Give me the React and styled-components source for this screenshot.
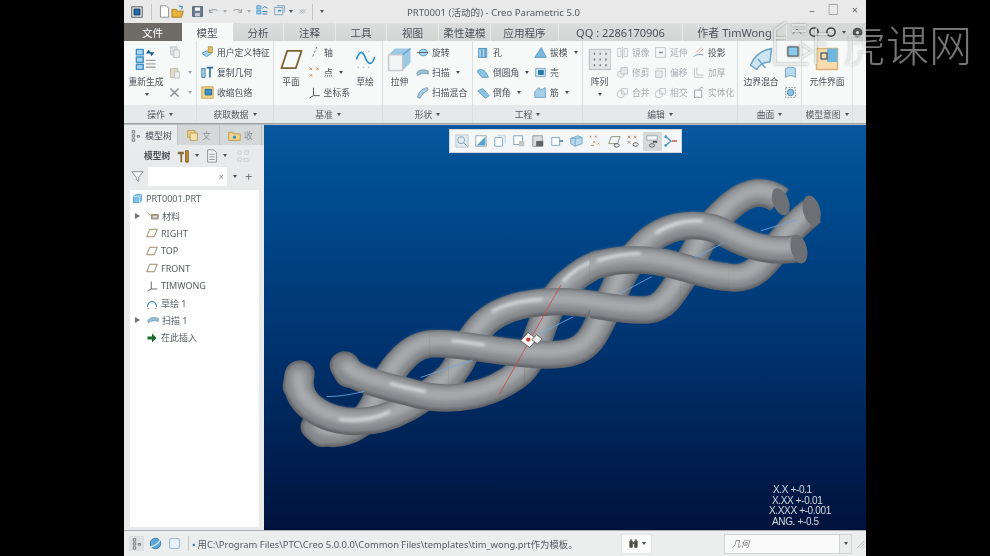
import React from 'react'
import styled, { createGlobalStyle } from 'styled-components'

const GlobalStyle = createGlobalStyle`
  html, body {
    margin: 0;
    width: 990px;
    height: 556px;
    overflow: hidden;
    background: #000;
    font-family: "Noto Sans", "Noto Sans CJK SC", sans-serif;
  }
`

const Page = styled.div`
  position: relative;
  width: 990px;
  height: 556px;
  background: #000;
`

const Window = styled.div`
  width: 742px;
  height: 556px;
  margin: 0 auto;
  display: flex;
  flex-direction: column;
  background: #e8eaeb;
  color: #4b5157;
  filter: blur(0.4px);
`

/* title bar */
const TitleBar = styled.header`
  height: 23px;
  flex: none;
  display: flex;
  align-items: center;
  background: #e9e9e9;
  font-size: 10px;
`
const Quick = styled.div`
  width: 283px;
  flex: none;
  display: flex;
  align-items: center;
  padding-left: 7px;
  box-sizing: border-box;
`
const QuickSep = styled.span`
  width: 1px;
  height: 16px;
  background: #c4c4c4;
  margin: ${(p) => p.$m || '0 5px'};
`
const Spacer = styled.span`
  width: ${(p) => p.$w}px;
  flex: none;
`
const Title = styled.div`
  color: #555b60;
  font-size: 9.6px;
  white-space: nowrap;
`
const WinButtons = styled.div`
  margin-left: auto;
  display: flex;
  gap: 13px;
  padding: 0 8px 3px 0;
  font-size: 11px;
  line-height: 14px;
  color: #666;
`

/* tabs */
const TabRow = styled.nav`
  height: 18px;
  flex: none;
  display: flex;
  background: #d6d7d7;
`
const Tab = styled.div`
  width: ${(p) => p.$w}px;
  flex: none;
  box-sizing: border-box;
  display: flex;
  align-items: center;
  justify-content: center;
  font-size: ${(p) => p.$size || 10.6}px;
  white-space: nowrap;
  color: ${(p) => (p.$file ? '#fff' : '#4b5157')};
  background: ${(p) => (p.$file ? '#6e6b67' : p.$on ? '#f7f8f8' : 'linear-gradient(#dcdddd, #d3d5d5)')};
  border-right: 1px solid ${(p) => (p.$file || p.$on ? 'transparent' : '#e7e8e8')};
`
const HelpIcons = styled.div`
  flex: 1;
  display: flex;
  align-items: center;
  justify-content: flex-end;
  gap: 5px;
  padding-right: 2px;
`

/* ribbon */
const Ribbon = styled.div`
  height: 82px;
  flex: none;
  display: flex;
  background: #f7f8f8;
  border-bottom: 1px solid #9ea2a4;
`
const Group = styled.section`
  width: ${(p) => p.$w}px;
  flex: ${(p) => (p.$w ? 'none' : 1)};
  box-sizing: border-box;
  display: flex;
  flex-direction: column;
  border-right: ${(p) => (p.$w ? '1px solid #dcdfe0' : 'none')};
`
const GroupBody = styled.div`
  height: 64px;
  display: flex;
  padding-left: ${(p) => p.$pad || 0}px;
`
const GroupLabel = styled.div`
  height: 18px;
  display: flex;
  align-items: center;
  justify-content: center;
  gap: 3px;
  background: #e6e9ea;
  font-size: 8.8px;
  color: #555b60;
`
const Big = styled.div`
  width: ${(p) => p.$w}px;
  flex: none;
  display: flex;
  flex-direction: column;
  align-items: center;
  padding-top: 4px;
  font-size: 8.8px;
  white-space: nowrap;
`
const BigIcon = styled.div`
  height: 28px;
  display: flex;
  align-items: center;
  justify-content: center;
`
const BigText = styled.div`
  height: 14px;
  line-height: 14px;
  margin-top: 2px;
  margin-bottom: 4px;
`
const Col = styled.div`
  width: ${(p) => (p.$w ? `${p.$w}px` : 'auto')};
  flex: none;
  display: flex;
  flex-direction: column;
  padding-top: 1px;
`
const Row = styled.div`
  height: 20px;
  display: flex;
  align-items: center;
  gap: 3px;
  font-size: 8.8px;
  white-space: nowrap;
  color: ${(p) => (p.$off ? '#a9adb0' : '#4b5157')};
`
const Caret = styled.i`
  display: block;
  width: 0;
  height: 0;
  margin-left: ${(p) => p.$m ?? 3}px;
  border-left: 2.5px solid transparent;
  border-right: 2.5px solid transparent;
  border-top: 3px solid ${(p) => p.$c || '#4b5157'};
`

/* work area */
const Main = styled.main`
  flex: 1;
  min-height: 0;
  display: flex;
  border-top: 1px solid #b9bdbf;
`
const Side = styled.aside`
  width: 140px;
  flex: none;
  display: flex;
  flex-direction: column;
  background: #e8eaeb;
`
const SideTabs = styled.div`
  height: 20px;
  flex: none;
  display: flex;
  background: #d5d8d9;
`
const SideTab = styled.div`
  width: ${(p) => p.$w}px;
  box-sizing: border-box;
  display: flex;
  align-items: center;
  justify-content: center;
  gap: 3px;
  font-size: 8.8px;
  background: ${(p) => (p.$on ? '#e9ebec' : '#d5d8d9')};
  border-right: 1px solid #bfc3c5;
  color: ${(p) => (p.$on ? '#4b5157' : '#8d9296')};
`
const SideTools = styled.div`
  height: 21px;
  flex: none;
  display: flex;
  align-items: center;
  padding-left: 20px;
  font-size: 8.8px;
  font-weight: 700;
`
const FilterRow = styled.div`
  height: 20px;
  flex: none;
  display: flex;
  align-items: center;
  padding-left: 7px;
`
const FilterInput = styled.div`
  width: 79px;
  height: 19px;
  margin-left: 4px;
  box-sizing: border-box;
  display: flex;
  align-items: center;
  justify-content: flex-end;
  padding-right: 3px;
  background: #fff;
  font-size: 9px;
  color: #888;
`
const Plus = styled.span`
  margin-left: 8px;
  font-size: 13px;
  line-height: 1;
  color: #6d7378;
`
const Tree = styled.div`
  flex: 1;
  margin: 4px 5px 3px 6px;
  background: #fff;
  display: flex;
  flex-direction: column;
`
const TreeRow = styled.div`
  height: 17.4px;
  flex: none;
  display: flex;
  align-items: center;
  gap: 3px;
  padding-left: ${(p) => p.$pad}px;
  font-size: 9px;
  color: #565c62;
`
const Arrow = styled.i`
  display: block;
  width: 0;
  height: 0;
  margin-right: 4px;
  border-top: 3px solid transparent;
  border-bottom: 3px solid transparent;
  border-left: 5px solid #6f7478;
`
const Viewport = styled.div`
  flex: 1;
  position: relative;
  overflow: hidden;
  background: linear-gradient(#07589f 0, #004f94 12%, #003673 50%, #00123c 100%);
`
const FloatBar = styled.div`
  position: absolute;
  top: 4px;
  left: 185px;
  width: 233px;
  height: 24px;
  box-sizing: border-box;
  display: flex;
  align-items: center;
  padding-left: 2px;
  background: #f3f5f6;
  border: 1px solid #cfd6db;
`
const FloatBtn = styled.div`
  width: 19.3px;
  height: 19px;
  display: flex;
  align-items: center;
  justify-content: center;
  background: ${(p) => (p.$on ? '#d5d8da' : 'transparent')};
  svg {
    opacity: 0.8;
  }
`
const Model = styled.svg`
  position: absolute;
  left: 6px;
  top: 45px;
  width: 570px;
  height: 280px;
  overflow: visible;
`
const Tolerance = styled.div`
  position: absolute;
  top: 360px;
  left: 505px;
  font-family: "Liberation Sans", sans-serif;
  font-size: 10px;
  line-height: 10.5px;
  letter-spacing: -0.35px;
  white-space: nowrap;
  color: #d4d8de;
`
const TolLine = styled.div`
  padding-left: ${(p) => p.$pad}px;
`

/* status */
const StatusBar = styled.footer`
  height: 26px;
  flex: none;
  box-sizing: border-box;
  display: flex;
  align-items: center;
  padding-left: 5px;
  background: #eceded;
  border-top: 1px solid #a9adaf;
`
const StatusBtn = styled.div`
  width: 15px;
  height: 15px;
  margin-right: 4px;
  display: flex;
  align-items: center;
  justify-content: center;
  background: ${(p) => (p.$on ? '#dcdedf' : 'none')};
`
const StatusSep = styled.span`
  width: 1px;
  height: 15px;
  margin: 0 3px 0 2px;
  background: #c3c6c8;
`
const Message = styled.div`
  width: 429px;
  flex: none;
  font-size: 9.4px;
  color: #555b60;
  white-space: nowrap;
  &::before {
    content: '•';
    color: #1d5f96;
    margin-right: 2px;
  }
`
const FindBox = styled.div`
  width: 31px;
  height: 20px;
  box-sizing: border-box;
  display: flex;
  align-items: center;
  justify-content: center;
  background: #fbfbfb;
  border: 1px solid #e2e3e4;
`
const SelectBox = styled.div`
  width: 128px;
  height: 20px;
  margin-left: 72px;
  box-sizing: border-box;
  display: flex;
  align-items: center;
  justify-content: space-between;
  padding-left: 7px;
  background: #fafafa;
  border: 1px solid #cfd2d3;
  font-size: 8.8px;
  font-style: italic;
  color: #777;
`
const SelectArrow = styled.div`
  width: 11px;
  height: 18px;
  display: flex;
  align-items: center;
  justify-content: center;
  background: #eceded;
  border-left: 1px solid #cfd2d3;
`
const Grip = styled.span`
  display: flex;
  margin-left: 2px;
`

/* watermark */
const Watermark = styled.div`
  position: absolute;
  left: 770px;
  top: 20px;
  display: flex;
  gap: 3px;
  pointer-events: none;
  filter: drop-shadow(0 0 1px rgba(0, 0, 0, 0.5));
`
const MarkText = styled.span`
  font-family: "Noto Sans CJK SC", sans-serif;
  font-weight: 200;
  font-size: 43px;
  line-height: 46px;
  color: rgba(255, 255, 255, 0.46);
`

const Svg = ({ s = 13, w, h, box = '0 0 16 16', children }) => (
  <svg width={w || s} height={h || s} viewBox={box} fill="none" strokeLinejoin="round">
    {children}
  </svg>
)

const B = '#3d8fc4'
const LB = '#a9d3ec'

const icons = {
  app: <><rect x="1" y="1" width="14" height="14" fill="#dfe6ea" stroke="#333" /><rect x="4" y="4" width="8" height="8" fill="#1f6fb0" stroke="#123" /></>,
  file: <path d="M3 1h7l3 3v11H3z" fill="#fff" stroke="#7a8085" />,
  open: <><path d="M1 5h5l1 2h7l-2 7H1z" fill="#e8b23e" stroke="#a77b1c" /><path d="M9 1l4 1-1 3" stroke="#3d8fc4" strokeWidth="1.4" /></>,
  save: <><rect x="2" y="2" width="12" height="12" fill="#6f7f94" stroke="#3f4c5e" /><rect x="5" y="3" width="6" height="4" fill="#fff" /><rect x="5" y="10" width="6" height="4" fill="#ccd" /></>,
  undo: <path d="M3 9a6 5 0 0 1 10-2M3 5v4h4" stroke="#a4a9ad" strokeWidth="1.4" />,
  redo: <path d="M13 9a6 5 0 0 0-10-2M13 5v4H9" stroke="#a4a9ad" strokeWidth="1.4" />,
  regen: <><rect x="1" y="1" width="5" height="4" fill={LB} stroke={B} /><rect x="1" y="7" width="5" height="4" fill={LB} stroke={B} /><path d="M8 4l3-2 3 2M8 8h6M8 11h6" stroke="#17689f" /></>,
  win: <><rect x="2" y="3" width="10" height="9" stroke="#6d9cbc" /><path d="M5 1h9v8" stroke="#6d9cbc" /><path d="M6 7h4" stroke={B} strokeWidth="2" /></>,
  closeWin: <path d="M3 5l6 6m0-6l-6 6M7 5l6 6m0-6l-6 6" stroke="#9aa0a4" />,
  regenBig: <><rect x="1" y="1" width="5" height="4" fill={LB} stroke={B} /><rect x="1" y="6.5" width="5" height="4" fill={LB} stroke={B} /><rect x="1" y="12" width="5" height="3.5" fill={LB} stroke={B} /><path d="M8 9h7M8 11.5h7M8 14h7" stroke="#a5a9ac" /><path d="M8 4l2-3 1 2h3l-2 3-1-2H8z" fill="#12588e" /></>,
  copy: <><rect x="3" y="1" width="8" height="10" fill="#dfe2e4" stroke="#b8bcbf" /><rect x="7" y="5" width="7" height="9" fill="#eceeef" stroke="#b8bcbf" /></>,
  paste: <><rect x="3" y="3" width="9" height="11" fill="#dfd9c8" stroke="#b8b4a6" /><rect x="8" y="7" width="6" height="8" fill="#eceeef" stroke="#b8bcbf" /></>,
  del: <path d="M3 3l10 10M13 3L3 13" stroke="#8a8f93" strokeWidth="1.8" />,
  udf: <><path d="M1 9l6-3 6 3-6 4z" fill={LB} stroke={B} /><path d="M9 1h5v7h-5z" fill="#e6c06a" stroke="#b08a2f" /></>,
  cgeo: <><rect x="1" y="3" width="4" height="11" fill={LB} stroke="#2a6e9e" /><path d="M7 2h8M11 2v12" stroke="#2a6e9e" strokeWidth="2" /></>,
  shrink: <><rect x="1" y="1" width="14" height="14" fill="#f2d78e" stroke="#c39a3a" /><rect x="5" y="4" width="8" height="7" fill={B} stroke="#175e90" /></>,
  plane: <path d="M5 2h10l-4 12H1z" stroke="#7a6436" strokeWidth="1.2" />,
  axis: <path d="M11 1L5 15" stroke="#55595d" strokeDasharray="3 2" />,
  point: <path d="M2 2l3 3m0-3l-3 3M10 2l3 3m0-3l-3 3M2 10l3 3m0-3l-3 3" stroke="#b9763d" />,
  csys: <path d="M7 2v10l-5 3M7 12h8" stroke="#55595d" strokeWidth="1.2" />,
  sketch: <><path d="M1 8c3-8 5-6 7-1s5 6 7-1" stroke="#2f8fc9" strokeWidth="1.3" /><path d="M2 2h12M2 14h12" stroke="#bcbfc2" strokeDasharray="1 3" /></>,
  extrude: <><path d="M5 1h10v9l-5 5H1V5z" fill="#9cc9e4" /><rect x="1" y="5" width="9" height="10" fill="#f4f5f5" stroke="#c7cacc" /><path d="M10 5l5-4" stroke="#6ca6cb" /></>,
  revolve: <><ellipse cx="9" cy="8" rx="5" ry="4" fill={LB} stroke={B} /><path d="M1 8h14" stroke="#555" /></>,
  sweep: <path d="M1 9c2-5 9-5 14-3v4c-4-2-10-1-13 2z" fill="#9bc3d8" stroke="#6d97ad" />,
  blend: <path d="M2 14c1-7 6-11 12-12l1 3c-4 2-8 5-10 10z" fill="#a4cde4" stroke="#6a99b5" />,
  hole: <><rect x="2" y="3" width="10" height="11" fill={LB} stroke={B} /><path d="M6 3v11M10 3v11" stroke="#2a6e9e" /></>,
  round: <path d="M1 5c6-2 10 1 13 9H6L1 8z" fill="#8cc4e3" stroke="#5b9bc0" />,
  chamfer: <path d="M1 6l6-3 8 9-5 3z" fill="#8cc4e3" stroke="#5b9bc0" />,
  draft: <path d="M1 14L9 2l6 12z" fill="#7ab9de" stroke="#4e93bb" />,
  shell: <><rect x="2" y="3" width="12" height="10" fill="#cfe1ee" stroke="#6d9cbc" /><rect x="5" y="5" width="7" height="6" fill="#2677ad" /></>,
  rib: <path d="M1 14V7l5-5 2 3 6-3v12z" fill="#a8d0e8" stroke="#5b9bc0" />,
  pattern: <><rect x="1" y="1" width="15" height="14" fill="#e3e5e6" stroke="#c5c8ca" /><path d="M4 4h1m3 0h1m3 0h1M4 8h1m3 0h1m3 0h1M4 12h1m3 0h1m3 0h1" stroke="#75797c" strokeWidth="1.4" /></>,
  mirror: <path d="M6 3L2 3v10h4zM10 3h4v10h-4zM8 1v14" stroke="#bbbfc2" />,
  trim: <><circle cx="6" cy="10" r="4" stroke="#b6babd" /><rect x="6" y="2" width="8" height="8" fill="#e4e6e7" stroke="#b6babd" /></>,
  merge: <><circle cx="6" cy="10" r="4.5" stroke="#b6babd" /><rect x="7" y="3" width="7" height="7" stroke="#b6babd" /></>,
  extend: <><rect x="2" y="2" width="12" height="12" stroke="#b6babd" /><path d="M6 8h5" stroke="#8d9195" strokeWidth="2" /></>,
  offset: <><path d="M2 3h12v11" stroke="#b6babd" /><rect x="2" y="6" width="8" height="8" fill="#e8eaeb" stroke="#b6babd" /></>,
  thick: <path d="M3 2v12h11M6 2v9h8" stroke="#b6babd" />,
  solid: <><path d="M3 5h9v9H3z" stroke="#8f9498" /><path d="M8 5l4-4 2 2" stroke="#8f9498" /></>,
  project: <><path d="M2 13c3-3 8-3 12-2" stroke="#6f8a9c" /><path d="M5 8l6-6M9 8l5-5" stroke="#d98a6a" /></>,
  boundary: <><path d="M1 12C4 5 9 2 15 1l-1 9c-4 0-7 2-9 5z" fill="#cde4f2" stroke="#6ea3c4" /><path d="M6 8l5 6" stroke="#6ea3c4" /></>,
  surfA: <path d="M2 14V3c4-2 8-2 12 0v11c-4-3-8-3-12 0z" fill="#b9dbef" stroke="#5b9bc0" />,
  surfB: <><rect x="2" y="2" width="12" height="12" stroke="#777" strokeDasharray="2 1.5" /><circle cx="8" cy="8" r="4" fill="#8cc4e3" stroke="#3d7ea8" /></>,
  comp: <><rect x="1" y="1" width="14" height="14" fill="#f6dcae" stroke="#d9b376" /><rect x="8" y="1" width="7" height="9" fill="#6fb7dc" /><path d="M4 4h4v4H4z" stroke="#666" /></>,
  tree: <path d="M4 2h3v3H4zM4 7h3v3H4zM4 12h3v3H4zM10 8h3v2h-3z" stroke="#666a6e" />,
  folder: <><rect x="2" y="2" width="9" height="8" fill="#f1d48a" stroke="#b8923f" /><rect x="5" y="5" width="9" height="9" fill="#f6e3b3" stroke="#b8923f" /></>,
  favs: <><path d="M1 4h5l1 2h8v8H1z" fill="#f1d48a" stroke="#b8923f" /><circle cx="8" cy="10" r="2" fill={B} /></>,
  tools: <><path d="M2 3h7v3H7v9H5V6H2z" fill="#8a6c3c" /><rect x="11" y="2" width="3" height="13" fill="#c98f2a" stroke="#6e5220" /></>,
  doc: <><path d="M3 1h7l3 3v11H3z" fill="#f4f5f5" stroke="#83888c" /><path d="M5 6h6M5 9h6M5 12h6" stroke="#83888c" /></>,
  grid: <path d="M2 2h4v4H2zM10 2h4v4h-4zM2 10h4v4H2zM9 11h6v3H9z" stroke="#b3b7ba" strokeDasharray="1 1" />,
  funnel: <path d="M1 2h14L9.5 9v5l-3-2V9z" stroke="#7e8488" fill="#f4f5f5" />,
  part: <><path d="M2 5l4-3h8v9l-3 3H2z" fill="#7fc0ea" stroke="#3d8fc4" /><path d="M2 5h9v9M11 5l3-3" stroke="#d4ecf9" /></>,
  material: <><path d="M1 4l4 3M6 6h9v6H6z" stroke="#8a6c3c" /><rect x="7" y="7" width="7" height="4" fill="#ddd" stroke="#777" /></>,
  datum: <path d="M5 3h10l-4 10H1z" stroke="#7a6436" />,
  arc: <><path d="M2 13a6 7 0 0 1 12 0" stroke="#2f7fb5" strokeWidth="1.5" /><path d="M1 15h3M12 15h3" stroke="#888" /></>,
  insert: <path d="M2 6h6V2l6 6-6 6v-4H2z" fill="#1c6b2a" />,
  zoom: <><rect x="1" y="1" width="14" height="14" fill="#dfe9f0" stroke="#aeb8bf" /><circle cx="7" cy="7" r="4" stroke="#5d89a8" /><path d="M10 10l4 4" stroke="#5d89a8" /></>,
  shade: <><rect x="2" y="2" width="12" height="12" fill="#fff" stroke="#7a8a96" /><path d="M3 13L13 3v10z" fill="#2f8fc9" /></>,
  cube: <><rect x="2" y="4" width="9" height="10" rx="1" fill="#fff" stroke="#4f90bb" /><path d="M5 2h9v9" stroke="#9ec5de" /></>,
  cubeB: <><rect x="2" y="2" width="10" height="10" fill="#fff" stroke="#5e86a2" /><rect x="8" y="8" width="6" height="6" fill="#b6babd" /></>,
  print: <><rect x="2" y="2" width="11" height="12" fill="#d4d7d9" stroke="#777" /><rect x="6" y="8" width="8" height="6" fill="#3c3f42" /></>,
  solidV: <><rect x="2" y="4" width="9" height="9" fill="#fff" stroke="#4f90bb" /><path d="M11 8l4 0" stroke="#2a6e9e" strokeWidth="2" /></>,
  wire: <><path d="M2 5l8-3 5 2v7l-8 3-5-3z" fill="#a9d3ec" stroke="#4f90bb" /><path d="M7 5v9M2 5l5 0 8-1" stroke="#4f90bb" /></>,
  datumPts: <path d="M2 2l2 2m0-2l-2 2M8 2l2 2m0-2l-2 2M6 8l2 2m0-2l-2 2M3 13h4M11 10l2 2m0-2l-2 2" stroke="#a8743a" />,
  datumPlane: <><path d="M5 3h10l-3 8H2z" stroke="#6d6d55" /><ellipse cx="11" cy="13" rx="3" ry="2" stroke="#333" /></>,
  datumAxis: <><path d="M2 2l3 3m0-3l-3 3M9 2l3 3m0-3l-3 3M2 8l3 3m0-3l-3 3" stroke="#8a6c4a" /><ellipse cx="11" cy="12" rx="3" ry="2" stroke="#333" /></>,
  spin: <><rect x="2" y="2" width="12" height="5" fill="#fff" stroke="#8d9296" /><rect x="9" y="8" width="5" height="2" fill="#333" /><ellipse cx="8" cy="13" rx="3" ry="2" stroke="#333" /></>,
  annot: <><path d="M2 3l6 5-6 5" stroke="#2a7fb0" strokeWidth="1.6" /><circle cx="2" cy="3" r="1.6" fill="#2a7fb0" /><circle cx="2" cy="13" r="1.6" fill="#2a7fb0" /><path d="M9 8h6" stroke="#b9503e" strokeWidth="2" /></>,
  globe: <><circle cx="8" cy="8" r="6.5" fill="#5aa6d8" stroke="#2a6e9e" /><path d="M2 12c4 0 10-4 12-9" stroke="#d8ecf7" strokeWidth="1.5" /></>,
  box: <rect x="2" y="2" width="12" height="12" rx="1.5" fill="#eaf3f9" stroke="#7fa8c4" />,
  binoc: <><rect x="2" y="4" width="5" height="10" rx="1" fill="#4a4a45" /><rect x="9" y="4" width="5" height="10" rx="1" fill="#4a4a45" /><rect x="3" y="2" width="3" height="3" fill="#6e6e66" /><rect x="10" y="2" width="3" height="3" fill="#6e6e66" /><rect x="7" y="6" width="2" height="3" fill="#4a4a45" /></>,
  up: <path d="M2 11l6-7 6 7" stroke="#666" />,
  ring: <circle cx="8" cy="8" r="5.5" stroke="#3f3f3f" strokeWidth="2" />,
  help: <><circle cx="8" cy="8" r="6" fill="#555" /><circle cx="8" cy="8" r="2" fill="#ddd" /></>,
  grip: <path d="M4 15L15 4M8 15l7-7M12 15l3-3" stroke="#b0b3b5" />
}

const Ico = ({ n, s, w, h }) => <Svg s={s} w={w} h={h}>{icons[n]}</Svg>

const SmallItem = ({ icon, text, off, caret }) => (
  <Row $off={off}>
    <Ico n={icon} />
    <span>{text}</span>
    {caret && <Caret />}
  </Row>
)

const BigItem = ({ w, icon, s = 24, sw, sh, text, caret }) => (
  <Big $w={w}>
    <BigIcon><Ico n={icon} s={s} w={sw} h={sh} /></BigIcon>
    <BigText>{text}</BigText>
    {caret && <Caret $m={1} />}
  </Big>
)

const Label = ({ children }) => (
  <GroupLabel>{children}<Caret $m={1} /></GroupLabel>
)

/* the three strands whole, in crop coordinates (x * 2.75, y * 3) */
const strandA = 'M82 612C60 700 150 755 240 755C340 755 420 690 490 625C530 585 540 510 590 460C640 410 720 395 800 395C880 395 960 425 1040 420C1080 415 1100 380 1130 330C1160 280 1180 195 1250 125C1300 70 1350 50 1402 90'
const strandB = 'M205 585C220 630 330 650 400 672C500 700 610 680 690 605C740 550 740 430 810 350C840 320 870 295 900 285C960 265 1040 265 1110 285C1170 300 1210 320 1260 322C1330 335 1360 280 1400 225C1430 180 1460 150 1490 125'
const strandC = 'M125 770C165 812 250 790 290 700C310 650 360 530 440 522C530 515 640 555 760 555C820 555 855 545 880 510C930 440 950 300 1040 215C1100 160 1190 150 1260 195C1320 230 1380 250 1455 235'

/* weave: each strand is drawn several times clipped to an x window, later windows sit in front */
const pieces = [
  { d: strandA, from: 1100, to: 1600 },
  { d: strandB, from: 1200, to: 1600 },
  { d: strandC, from: 860, to: 1600, shine: 'M1060 190C1100 160 1140 150 1190 152' },
  { d: strandB, from: 690, to: 900, shine: 'M805 335C830 305 860 285 890 272' },
  { d: strandA, from: 480, to: 1130, shine: 'M610 425C650 400 700 390 750 388' },
  { d: strandB, from: 880, to: 1260, shine: 'M900 272C950 255 980 250 1020 250' },
  { d: strandC, from: 0, to: 440, tip: 'M125 770L145 790' },
  { d: strandA, from: 0, to: 490, tip: 'M82 612L76 650', shine: 'M190 748C240 755 290 745 330 725' },
  { d: strandB, from: 0, to: 700, tip: 'M205 585L218 612', shine: 'M330 640C370 652 400 660 430 664' },
  { d: strandC, from: 440, to: 880, shine: 'M500 512C530 515 560 520 590 525' }
]

const Tube = ({ id, d, tip, shine }) => (
  <g clipPath={`url(#${id})`} fill="none" strokeLinecap="butt">
    <path d={d} stroke="#5f6266" strokeWidth="82" />
    {tip && <path d={tip} stroke="#5f6266" strokeWidth="82" strokeLinecap="round" />}
    <path d={d} stroke="#83868a" strokeWidth="70" transform="translate(0 -3)" filter="url(#edge)" />
    {tip && <path d={tip} stroke="#83868a" strokeWidth="68" strokeLinecap="round" filter="url(#edge)" />}
    <path d={d} stroke="#a8abae" strokeWidth="36" transform="translate(0 -9)" filter="url(#soft)" />
    {shine && <path d={shine} stroke="#dfe3e5" strokeWidth="10" opacity="0.8" filter="url(#soft2)" />}
  </g>
)

const caps = [
  [1405, 95, 22, 42, -18],
  [1490, 122, 24, 46, -12],
  [1455, 237, 22, 44, -12]
]

const blue = [
  'M155 680C190 680 230 672 260 664',
  'M415 622L558 570',
  'M740 492L835 440',
  'M960 372L1050 320',
  'M1170 262L1250 218',
  'M1350 182L1450 150'
]

const Blur = ({ id, dev }) => (
  <filter id={id} filterUnits="userSpaceOnUse" x="-100" y="-100" width="1800" height="1100">
    <feGaussianBlur stdDeviation={dev} />
  </filter>
)

const Helix = () => (
  <Model viewBox="0 0 1568 840" preserveAspectRatio="none">
    <defs>
      <Blur id="edge" dev="4" />
      <Blur id="soft" dev="9" />
      <Blur id="soft2" dev="5" />
      {pieces.map((p, i) => (
        <clipPath key={i} id={`piece${i}`}>
          <rect x={p.from} y="-50" width={p.to - p.from} height="950" />
        </clipPath>
      ))}
    </defs>
    {pieces.map((p, i) => <Tube key={i} id={`piece${i}`} {...p} />)}
    {caps.map(([x, y, rx, ry, r], i) => (
      <ellipse key={i} cx={x} cy={y} rx={rx} ry={ry} fill="#6c6f73" transform={`rotate(${r} ${x} ${y})`} />
    ))}
    {blue.map((d, i) => <path key={i} d={d} fill="none" stroke="#6ea6e0" strokeWidth="2.4" />)}
    <path d="M630 675L800 345" stroke="#c9504f" strokeWidth="2.6" />
    <g transform="translate(712 510) rotate(40)">
      <rect x="-16" y="-16" width="32" height="32" fill="#f4f4f4" stroke="#444" strokeWidth="2" />
      <circle cx="-2" cy="0" r="6" fill="#d43a33" />
      <rect x="6" y="-26" width="20" height="20" fill="#eee" stroke="#444" strokeWidth="2" />
    </g>
  </Model>
)

const floatIcons = ['zoom', 'shade', 'cube', 'cubeB', 'print', 'solidV', 'wire', 'datumPts', 'datumPlane', 'datumAxis', 'spin', 'annot']

const treeRows = [
  { icon: 'material', text: '材料', arrow: true },
  { icon: 'datum', text: 'RIGHT' },
  { icon: 'datum', text: 'TOP' },
  { icon: 'datum', text: 'FRONT' },
  { icon: 'csys', text: 'TIMWONG' },
  { icon: 'arc', text: '草绘 1' },
  { icon: 'sweep', text: '扫描 1', arrow: true },
  { icon: 'insert', text: '在此插入' }
]

const App = () => (
  <Page>
    <GlobalStyle />
    <Window>
      <TitleBar>
        <Quick>
          <Ico n="app" s={12} />
          <QuickSep $m="0 6px 0 8px" />
          <Ico n="file" /><Ico n="open" s={14} />
          <Spacer $w={6} />
          <Ico n="save" />
          <Spacer $w={3} />
          <Ico n="undo" /><Caret $c="#a4a9ad" />
          <Spacer $w={4} />
          <Ico n="redo" /><Caret $c="#a4a9ad" />
          <Spacer $w={5} />
          <Ico n="regen" />
          <Spacer $w={4} />
          <Ico n="win" /><Caret />
          <Spacer $w={4} />
          <Ico n="closeWin" s={11} />
          <QuickSep $m="0 4px" />
          <Caret />
        </Quick>
        <Title>PRT0001 (活动的) - Creo Parametric 5.0</Title>
        <WinButtons>
          <span>–</span><span>□</span><span>×</span>
        </WinButtons>
      </TitleBar>

      <TabRow>
        <Tab $w={58} $file>文件</Tab>
        <Tab $w={51} $on>模型</Tab>
        <Tab $w={51}>分析</Tab>
        <Tab $w={52}>注释</Tab>
        <Tab $w={51}>工具</Tab>
        <Tab $w={52}>视图</Tab>
        <Tab $w={52}>柔性建模</Tab>
        <Tab $w={68}>应用程序</Tab>
        <Tab $w={124} $size={11}>QQ : 2286170906</Tab>
        <Tab $w={104} $size={11}>作者 TimWong</Tab>
        <HelpIcons>
          <Ico n="up" s={12} /><Ico n="ring" s={12} /><Ico n="ring" s={12} /><Caret $m={0} /><Ico n="help" s={13} />
        </HelpIcons>
      </TabRow>

      <Ribbon>
        <Group $w={73}>
          <GroupBody>
            <BigItem w={44} icon="regenBig" s={22} text="重新生成" caret />
            <Col>
              <Row><Ico n="copy" /></Row>
              <Row><Ico n="paste" /><Caret $c="#a4a9ad" $m={4} /></Row>
              <Row><Ico n="del" /><Caret $c="#a4a9ad" $m={4} /></Row>
            </Col>
          </GroupBody>
          <Label>操作</Label>
        </Group>
        <Group $w={77}>
          <GroupBody $pad={4}>
            <Col>
              <SmallItem icon="udf" text="用户定义特征" />
              <SmallItem icon="cgeo" text="复制几何" />
              <SmallItem icon="shrink" text="收缩包络" />
            </Col>
          </GroupBody>
          <Label>获取数据</Label>
        </Group>
        <Group $w={109}>
          <GroupBody>
            <BigItem w={34} icon="plane" s={23} text="平面" />
            <Col $w={42}>
              <SmallItem icon="axis" text="轴" />
              <SmallItem icon="point" text="点" caret />
              <SmallItem icon="csys" text="坐标系" />
            </Col>
            <BigItem w={30} icon="sketch" s={21} text="草绘" />
          </GroupBody>
          <Label>基准</Label>
        </Group>
        <Group $w={90}>
          <GroupBody>
            <BigItem w={33} icon="extrude" s={25} text="拉伸" />
            <Col>
              <SmallItem icon="revolve" text="旋转" />
              <SmallItem icon="sweep" text="扫描" caret />
              <SmallItem icon="blend" text="扫描混合" />
            </Col>
          </GroupBody>
          <Label>形状</Label>
        </Group>
        <Group $w={110}>
          <GroupBody $pad={4}>
            <Col $w={57}>
              <SmallItem icon="hole" text="孔" />
              <SmallItem icon="round" text="倒圆角" caret />
              <SmallItem icon="chamfer" text="倒角" caret />
            </Col>
            <Col>
              <SmallItem icon="draft" text="拔模" caret />
              <SmallItem icon="shell" text="壳" />
              <SmallItem icon="rib" text="筋" caret />
            </Col>
          </GroupBody>
          <Label>工程</Label>
        </Group>
        <Group $w={155}>
          <GroupBody>
            <BigItem w={33} icon="pattern" s={23} text="阵列" caret />
            <Col $w={38}>
              <SmallItem icon="mirror" text="镜像" off />
              <SmallItem icon="trim" text="修剪" off />
              <SmallItem icon="merge" text="合并" off />
            </Col>
            <Col $w={38}>
              <SmallItem icon="extend" text="延伸" off />
              <SmallItem icon="offset" text="偏移" off />
              <SmallItem icon="merge" text="相交" off />
            </Col>
            <Col>
              <SmallItem icon="project" text="投影" />
              <SmallItem icon="thick" text="加厚" off />
              <SmallItem icon="solid" text="实体化" off />
            </Col>
          </GroupBody>
          <Label>编辑</Label>
        </Group>
        <Group $w={64}>
          <GroupBody>
            <BigItem w={46} icon="boundary" s={24} text="边界混合" />
            <Col>
              <Row />
              <Row><Ico n="surfA" /></Row>
              <Row><Ico n="surfB" /></Row>
            </Col>
          </GroupBody>
          <Label>曲面</Label>
        </Group>
        <Group $w={51}>
          <GroupBody>
            <BigItem w={50} icon="comp" s={24} text="元件界面" />
          </GroupBody>
          <Label>模型意图</Label>
        </Group>
        <Group>
          <GroupBody />
          <GroupLabel />
        </Group>
      </Ribbon>

      <Main>
        <Side>
          <SideTabs>
            <SideTab $w={54} $on><Ico n="tree" />模型树</SideTab>
            <SideTab $w={42}><Ico n="folder" />文</SideTab>
            <SideTab $w={42}><Ico n="favs" />收</SideTab>
          </SideTabs>
          <SideTools>
            模型树
            <Spacer $w={6} />
            <Ico n="tools" s={14} /><Caret $m={5} />
            <Spacer $w={6} />
            <Ico n="doc" s={14} /><Caret $m={4} />
            <Spacer $w={9} />
            <Ico n="grid" s={14} />
          </SideTools>
          <FilterRow>
            <Ico n="funnel" />
            <FilterInput>×</FilterInput>
            <Caret $m={6} />
            <Plus>+</Plus>
          </FilterRow>
          <Tree>
            <TreeRow $pad={2}><Ico n="part" s={11} />PRT0001.PRT</TreeRow>
            {treeRows.map((r) => (
              <TreeRow key={r.text} $pad={r.arrow ? 5 : 16}>
                {r.arrow && <Arrow />}
                <Ico n={r.icon} s={12} />
                {r.text}
              </TreeRow>
            ))}
          </Tree>
        </Side>
        <Viewport>
          <Helix />
          <FloatBar>
            {floatIcons.map((n, i) => (
              <FloatBtn key={i} $on={n === 'spin'}><Ico n={n} s={14} /></FloatBtn>
            ))}
          </FloatBar>
          <Tolerance>
            <TolLine $pad={4}>X.X +-0.1</TolLine>
            <TolLine $pad={3}>X.XX +-0.01</TolLine>
            <TolLine $pad={0}>X.XXX +-0.001</TolLine>
            <TolLine $pad={3}>ANG. +-0.5</TolLine>
          </Tolerance>
        </Viewport>
      </Main>

      <StatusBar>
        <StatusBtn $on><Ico n="tree" /></StatusBtn>
        <StatusBtn><Ico n="globe" /></StatusBtn>
        <StatusBtn><Ico n="box" /></StatusBtn>
        <StatusSep />
        <Message>用C:\Program Files\PTC\Creo 5.0.0.0\Common Files\templates\tim_wong.prt作为模板。</Message>
        <FindBox><Ico n="binoc" s={11} /><Caret /></FindBox>
        <SelectBox>几何<SelectArrow><Caret $m={0} /></SelectArrow></SelectBox>
        <Grip><Ico n="grip" s={11} /></Grip>
      </StatusBar>
    </Window>

    <Watermark>
      <svg width="70" height="46" viewBox="0 6 70 46" fill="none" stroke="rgba(255,255,255,.6)" strokeWidth="2">
        <path d="M5 16V50h33M5 16L16 8M5 24h10M22 11h14M22 17h14" />
        <rect x="18" y="33" width="10" height="9" fill="#8cc8e8" stroke="#555" strokeWidth="1" />
        <path d="M31 30l11 7-11 7z" />
        <path d="M46 14V50M46 20h12M46 30h10" />
      </svg>
      <MarkText>虎课网</MarkText>
    </Watermark>
  </Page>
)

export default App
